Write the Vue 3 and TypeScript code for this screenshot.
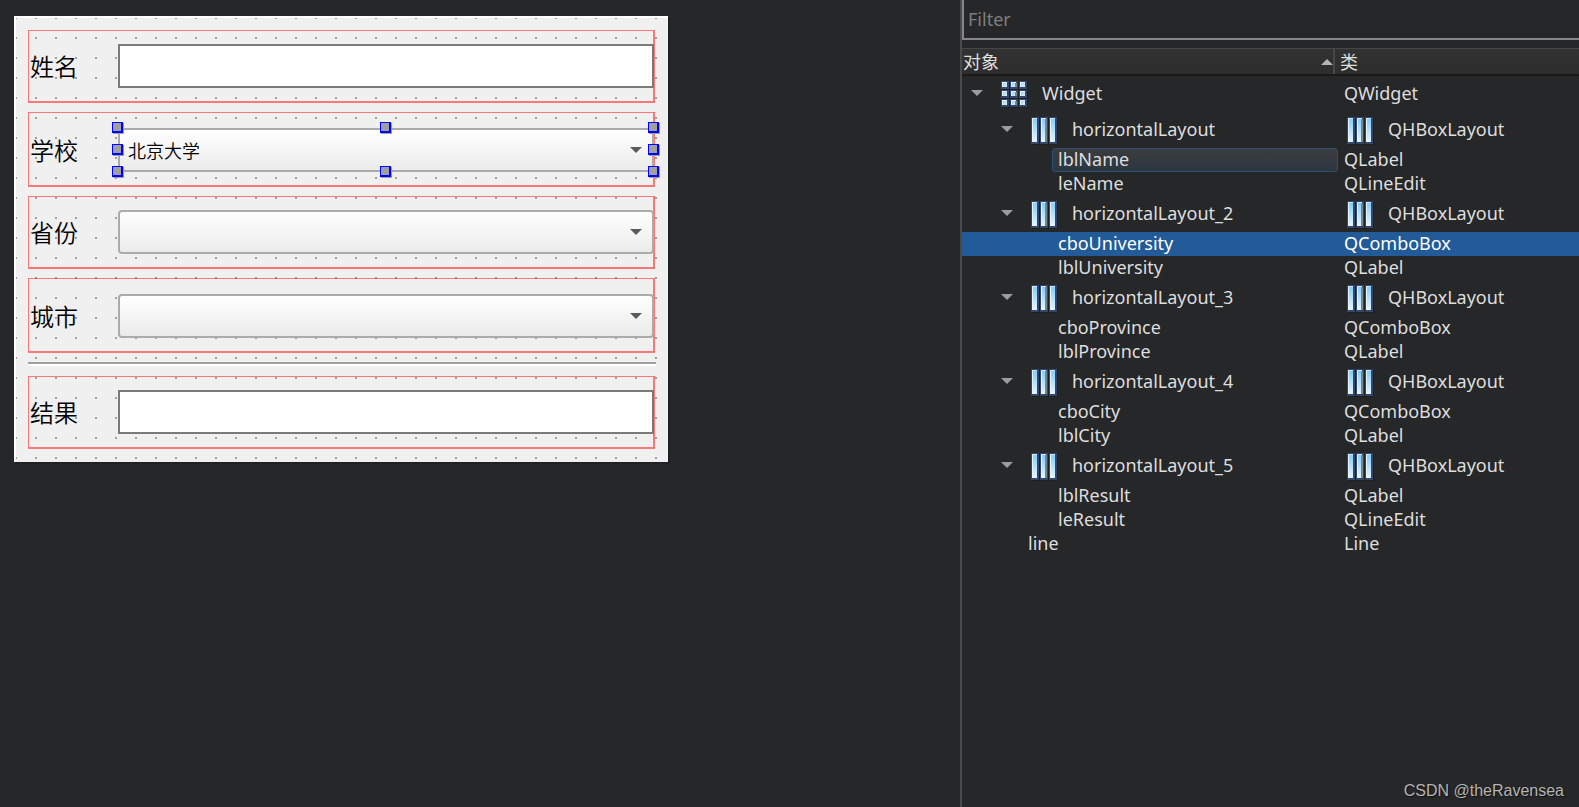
<script setup lang="ts">
import { ref } from 'vue'

interface Field {
  id: string
  label: string
  kind: 'edit' | 'combo'
  value: string
  tall?: boolean
  selected?: boolean
  ruleBefore?: boolean
}

interface TreeNode {
  name: string
  type: string
  depth: number
  icon?: 'grid' | 'hbox'
  state?: 'current' | 'hover'
}

const fields = ref<Field[]>([
  { id: 'leName', label: '姓名', kind: 'edit', value: '' },
  { id: 'cboUniversity', label: '学校', kind: 'combo', value: '北京大学', tall: true, selected: true },
  { id: 'cboProvince', label: '省份', kind: 'combo', value: '' },
  { id: 'cboCity', label: '城市', kind: 'combo', value: '', tall: true },
  { id: 'leResult', label: '结果', kind: 'edit', value: '', ruleBefore: true },
])

const handles = ['nw', 'n', 'ne', 'w', 'e', 'sw', 's', 'se']

const nodes: TreeNode[] = [
  { name: 'Widget', type: 'QWidget', depth: 0, icon: 'grid' },
  { name: 'horizontalLayout', type: 'QHBoxLayout', depth: 1, icon: 'hbox' },
  { name: 'lblName', type: 'QLabel', depth: 2, state: 'hover' },
  { name: 'leName', type: 'QLineEdit', depth: 2 },
  { name: 'horizontalLayout_2', type: 'QHBoxLayout', depth: 1, icon: 'hbox' },
  { name: 'cboUniversity', type: 'QComboBox', depth: 2, state: 'current' },
  { name: 'lblUniversity', type: 'QLabel', depth: 2 },
  { name: 'horizontalLayout_3', type: 'QHBoxLayout', depth: 1, icon: 'hbox' },
  { name: 'cboProvince', type: 'QComboBox', depth: 2 },
  { name: 'lblProvince', type: 'QLabel', depth: 2 },
  { name: 'horizontalLayout_4', type: 'QHBoxLayout', depth: 1, icon: 'hbox' },
  { name: 'cboCity', type: 'QComboBox', depth: 2 },
  { name: 'lblCity', type: 'QLabel', depth: 2 },
  { name: 'horizontalLayout_5', type: 'QHBoxLayout', depth: 1, icon: 'hbox' },
  { name: 'lblResult', type: 'QLabel', depth: 2 },
  { name: 'leResult', type: 'QLineEdit', depth: 2 },
  { name: 'line', type: 'Line', depth: 1 },
]

const filter = ref('')
const steps = [0, 9, 18]
</script>

<template>
  <div class="workspace">
    <svg class="defs" width="0" height="0" aria-hidden="true">
      <defs>
        <linearGradient id="bar-fill" x1="0" y1="0" x2="0" y2="1">
          <stop offset="0" stop-color="#7fcdfb" />
          <stop offset="1" stop-color="#e4f6fe" />
        </linearGradient>
        <linearGradient id="cell-fill" x1="0" y1="0" x2="1" y2="1">
          <stop offset="0" stop-color="#7cc4ee" />
          <stop offset="1" stop-color="#e9f8ff" />
        </linearGradient>
        <symbol id="icon-hbox" viewBox="0 0 28 28">
          <g v-for="(x, i) in steps" :key="x">
            <rect :x="x + 1" y="1" width="8" height="27" fill="#1a1b1e" opacity="0.6" />
            <rect :x="x" y="0" width="8" height="27" fill="#34466a" />
            <rect :x="x + 1" y="1" width="5" height="24" fill="url(#bar-fill)" />
            <rect :x="x + 1" y="1" width="1" height="24" fill="#e3f3fc" />
            <rect :x="x + 1" y="1" width="5" height="1" fill="#c8e8fa" />
            <rect v-if="i === 1" :x="x + 5" y="2" width="2" height="23" fill="#71868e" />
          </g>
        </symbol>
        <symbol id="icon-grid" viewBox="0 0 28 28">
          <g v-for="y in steps" :key="y">
            <g v-for="x in steps" :key="x">
              <rect :x="x + 1" :y="y + 1" width="8" height="8" fill="#1a1b1e" opacity="0.6" />
              <rect :x="x" :y="y" width="8" height="8" fill="#34466a" />
              <rect :x="x + 1" :y="y + 1" width="5" height="5" fill="url(#cell-fill)" />
              <path :d="`M${x + 1} ${y + 1}h5v1h-4v4h-1z`" fill="#e6f5fc" />
              <rect v-if="x === 9" :x="x + 5" :y="y + 2" width="2" height="4" fill="#71868e" />
            </g>
          </g>
        </symbol>
      </defs>
    </svg>

    <main class="canvas">
      <form class="form" @submit.prevent>
        <template v-for="f in fields" :key="f.id">
          <hr v-if="f.ruleBefore" class="rule" />
          <div class="group" :class="{ tall: f.tall }">
            <label class="label" :for="f.id">{{ f.label }}</label>
            <div class="control">
              <input v-if="f.kind === 'edit'" :id="f.id" v-model="f.value" class="edit" type="text" />
              <template v-else>
                <select :id="f.id" v-model="f.value" class="combo">
                  <option :value="f.value">{{ f.value }}</option>
                </select>
                <svg class="chevron" width="12" height="6" viewBox="0 0 12 6" aria-hidden="true">
                  <path d="M0 0H12L6 6Z" fill="#5a5a5a" />
                </svg>
              </template>
              <template v-if="f.selected">
                <span v-for="h in handles" :key="h" class="handle" :class="h"></span>
              </template>
            </div>
          </div>
        </template>
      </form>
    </main>

    <aside class="inspector">
      <input v-model="filter" class="filter" type="text" placeholder="Filter" aria-label="Filter" />
      <table class="tree">
        <colgroup>
          <col class="col-object" />
          <col class="col-class" />
        </colgroup>
        <thead>
          <tr>
            <th scope="col">
              <button type="button" class="head sorted">
                <span>对象</span>
                <svg width="12" height="6" viewBox="0 0 12 6" aria-hidden="true">
                  <path d="M0 6H12L6 0Z" fill="#b4b4b4" />
                </svg>
              </button>
            </th>
            <th scope="col"><button type="button" class="head">类</button></th>
          </tr>
        </thead>
        <tbody>
          <tr v-for="n in nodes" :key="n.name" :class="[n.state, { branch: n.icon }]">
            <td>
              <div class="name" :class="'depth-' + n.depth">
                <template v-if="n.icon">
                  <button type="button" class="toggle" :aria-label="n.name" aria-expanded="true">
                    <svg width="12" height="6" viewBox="0 0 12 6" aria-hidden="true">
                      <path d="M0 0H12L6 6Z" fill="#9c9c9c" />
                    </svg>
                  </button>
                  <svg class="icon" width="28" height="28" aria-hidden="true">
                    <use :href="'#icon-' + n.icon" />
                  </svg>
                </template>
                <span class="text">{{ n.name }}</span>
              </div>
            </td>
            <td>
              <div class="type">
                <svg v-if="n.icon === 'hbox'" class="icon" width="28" height="28" aria-hidden="true">
                  <use href="#icon-hbox" />
                </svg>
                <span>{{ n.type }}</span>
              </div>
            </td>
          </tr>
        </tbody>
      </table>
      <footer class="credit">CSDN @theRavensea</footer>
    </aside>
  </div>
</template>

<style>
body {
  background: #262729;
}
</style>

<style scoped>
.workspace,
.workspace * {
  box-sizing: border-box;
}

.workspace {
  display: grid;
  grid-template-columns: 960fr 619fr;
  min-height: 100vh;
  background: #262729;
  color: #dedede;
  font-family: 'Noto Sans', 'Noto Sans CJK SC', sans-serif;
  font-size: 18px;
}

button,
input,
select {
  margin: 0;
  font: inherit;
  border-radius: 0;
  outline: none;
}

.defs {
  position: absolute;
}

.canvas {
  padding: 16px 14px;
}

/* Form being designed */
.form {
  max-width: 654px;
  padding: 12px 12px 13px;
  border: solid #fff;
  border-width: 2px 0 0 2px;
  background: conic-gradient(at 2px 2px, transparent 75%, #a0a0a0 0) -1px -1px / 20px 20px #f0f0f0;
  box-shadow: 2px 2px 0 #1f2022;
  color: #000;
  font-family: 'Noto Sans CJK SC', sans-serif;
  font-weight: 350;
}

.group {
  display: flex;
  margin: 0 1px 9px 0;
  padding: 13px 0;
  border: solid rgba(255, 0, 0, 0.5);
  border-width: 1px 2px 2px 1px;
}

.group.tall {
  padding-top: 15px;
}

.group:last-child {
  margin-bottom: 0;
}

.label {
  flex: 0 0 89px;
  padding-left: 1px;
  font-size: 24px;
  line-height: 44px;
}

.control {
  position: relative;
  flex: 1;
  min-width: 0;
  height: 44px;
  margin-right: -1px;
}

.edit,
.combo {
  display: block;
  width: 100%;
  height: 44px;
  padding: 0 8px;
  color: #000;
}

.edit {
  border: 2px solid #7a7a7a;
  background: #fff;
}

.combo {
  appearance: none;
  border: 2px solid #ababab;
  border-radius: 4px;
  background: linear-gradient(#fff, #ebebeb);
}

.chevron {
  position: absolute;
  top: 19px;
  right: 12px;
  pointer-events: none;
}

.handle {
  position: absolute;
  width: 11px;
  height: 11px;
  border: solid #00f;
  border-width: 1px 2px 2px 1px;
  background: #a0a0a0;
  box-shadow: 1px 1px 0 #a0a0a0;
}

.nw, .n, .ne { top: -6px; }
.w, .e { top: 16px; }
.sw, .s, .se { top: 38px; }
.nw, .w, .sw { left: -6px; }
.n, .s { left: calc(50% - 6px); }
.ne, .e, .se { left: calc(100% - 6px); }

.rule {
  height: 4px;
  margin: 0 0 10px;
  border: solid #a0a0a0;
  border-width: 2px 0 0;
  background: #fff;
}

/* Object inspector */
.inspector {
  display: flex;
  flex-direction: column;
  border-left: 2px solid #4a4a4c;
}

.filter {
  width: 100%;
  height: 40px;
  margin-bottom: 8px;
  padding: 0 4px;
  border: solid #868686;
  border-width: 0 0 2px 2px;
  background: #262729;
  color: #dedede;
}

.filter::placeholder {
  color: #7f7f7f;
  opacity: 1;
}

.tree {
  width: 100%;
  table-layout: fixed;
  border-collapse: separate;
  border-spacing: 0;
}

.col-object {
  width: 376px;
}

th,
td {
  padding: 0;
  text-align: left;
  font-weight: normal;
}

thead tr {
  height: 28px;
}

th {
  border-top: 1px solid #464646;
  border-bottom: 2px solid #1a1a1b;
  background: #303030;
}

.head {
  display: flex;
  align-items: center;
  justify-content: space-between;
  width: 100%;
  height: 25px;
  padding: 1px 2px 0;
  border: 0;
  background: linear-gradient(#323232, #2d2d2d);
  color: #dedede;
  line-height: 24px;
}

.sorted {
  width: calc(100% - 3px);
  padding: 1px 0 0 1px;
  border-right: 2px solid #484848;
}

tbody tr {
  height: 24px;
}

tbody tr.branch {
  height: 36px;
}

.name,
.type {
  display: flex;
  align-items: center;
  height: 24px;
  padding-bottom: 2px;
  line-height: 22px;
  white-space: nowrap;
}

.branch .name,
.branch .type {
  height: 36px;
}

.depth-0 { padding-left: 9px; }
.depth-1 { padding-left: 39px; }
.depth-2 { padding: 0 0 0 90px; }

.name.depth-1 > .text:first-child {
  padding-left: 27px;
}

.depth-2 .text {
  flex: 1;
  height: 24px;
  padding-left: 5px;
  border: 1px solid transparent;
  line-height: 20px;
}

.hover .text {
  border-color: #2f5075;
  border-radius: 3px;
  background: linear-gradient(#3a3c3f, #2c3742) padding-box;
}

.current {
  background: #225b97;
  color: #fff;
}

.toggle {
  display: flex;
  width: 12px;
  padding: 0;
  border: 0;
  background: none;
}

.icon {
  flex: none;
}

.name .icon {
  margin: 4px 13px 0 18px;
}

.type {
  padding-left: 6px;
}

.type .icon {
  margin: 4px 13px 0 3px;
}

.credit {
  margin-top: auto;
  padding: 0 15px 6px;
  color: #b4b4b4;
  font-family: 'Liberation Sans', sans-serif;
  font-size: 16px;
  line-height: 20px;
  text-align: right;
  text-shadow: 1px 1px 1px #111;
}
</style>
